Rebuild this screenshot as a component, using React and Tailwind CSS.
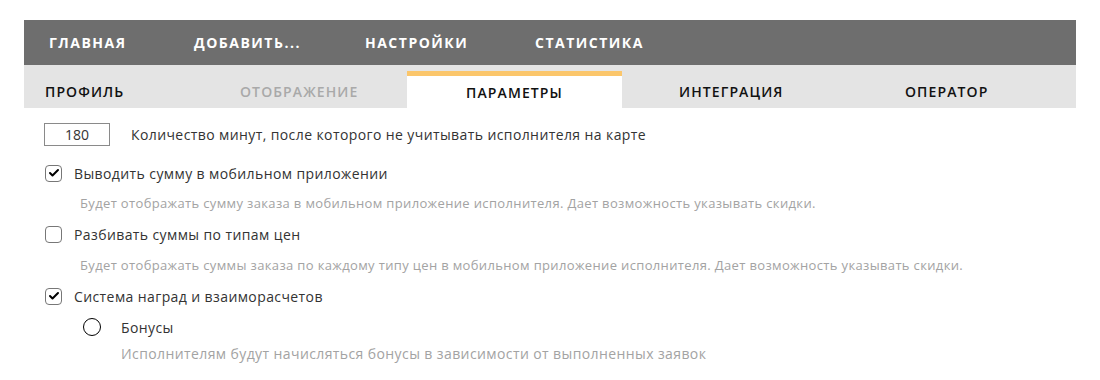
import { Check } from 'lucide-react'

const MENU = [
  { label: 'ГЛАВНАЯ', cls: 'w-[170px] pl-[25px]' },
  { label: 'ДОБАВИТЬ...', cls: 'w-[171px]' },
  { label: 'НАСТРОЙКИ', cls: 'w-[170px]' },
  { label: 'СТАТИСТИКА', cls: '' },
]

const TABS = [
  { label: 'ПРОФИЛЬ', cls: 'w-[195px] pl-[21px]' },
  { label: 'ОТОБРАЖЕНИЕ', cls: 'w-[188px] pl-[21px] text-[#a9a9a9]' },
  { label: 'ПАРАМЕТРЫ', cls: 'w-[215px] justify-center', active: true },
  { label: 'ИНТЕГРАЦИЯ', cls: 'w-[218px] pl-[57px]' },
  { label: 'ОПЕРАТОР', cls: 'flex-1 pl-[65px]' },
]

function CheckBox({ checked }) {
  return (
    <span className="w-[17px] h-[17px] rounded-[4px] border border-[#777] flex items-center justify-center shrink-0 bg-white">
      {checked && <Check size={12} strokeWidth={4} className="text-black" />}
    </span>
  )
}

function Option({ checked, label, hint }) {
  return (
    <div>
      <div className="flex items-center gap-[12px] pl-[21px] h-[20px]">
        <CheckBox checked={checked} />
        <span className="text-[14px] tracking-[0.4px] text-[#333]">{label}</span>
      </div>
      {hint && <p className="pl-[56px] mt-[11px] text-[13px] tracking-[0.35px] text-[#a3a3a3]">{hint}</p>}
    </div>
  )
}

export default function App() {
  return (
    <div className="w-[1100px] h-[380px] bg-white pt-[20px] px-[24px] overflow-hidden" style={{ fontFamily: '"Open Sans", sans-serif' }}>
      {/* Top menu */}
      <div className="h-[45px] bg-[#6e6e6e] flex items-center text-white font-bold text-[14px] tracking-[1.5px]">
        {MENU.map((m) => (
          <div key={m.label} className={m.cls}>{m.label}</div>
        ))}
      </div>

      {/* Tabs */}
      <div className="h-[43px] bg-[#e4e4e4] flex text-[14px] font-semibold tracking-[1.1px] text-[#111]">
        {TABS.map((t) =>
          t.active ? (
            <div key={t.label} className={`${t.cls} flex flex-col mt-[6px]`}>
              <div className="h-[5px] bg-[#fbc66b]" />
              <div className="flex-1 bg-white flex items-center justify-center">{t.label}</div>
            </div>
          ) : (
            <div key={t.label} className={`${t.cls} flex items-center pt-[10px]`}>{t.label}</div>
          )
        )}
      </div>

      {/* Content */}
      <div className="pt-[15px]">
        <div className="flex items-center gap-[21px] pl-[20px]">
          <div className="w-[66px] h-[23px] border border-[#8a8a8a] flex items-center justify-center text-[14px] text-[#333]">180</div>
          <span className="text-[14px] tracking-[0.4px] text-[#333]">Количество минут, после которого не учитывать исполнителя на карте</span>
        </div>

        <div className="mt-[17px] flex flex-col gap-[11px]">
          <Option checked label="Выводить сумму в мобильном приложении" hint="Будет отображать сумму заказа в мобильном приложение исполнителя. Дает возможность указывать скидки." />
          <Option label="Разбивать суммы по типам цен" hint="Будет отображать суммы заказа по каждому типу цен в мобильном приложение исполнителя. Дает возможность указывать скидки." />
          <Option checked label="Система наград и взаиморасчетов" />
        </div>

        <div className="mt-[11px] pl-[59px]">
          <div className="flex items-center gap-[20px] h-[20px]">
            <span className="w-[18px] h-[18px] rounded-full border-[1.5px] border-black shrink-0" />
            <span className="text-[14px] tracking-[0.4px] text-[#333]">Бонусы</span>
          </div>
          <p className="pl-[38px] mt-[6px] text-[14px] tracking-[0.4px] text-[#a3a3a3]">Исполнителям будут начисляться бонусы в зависимости от выполненных заявок</p>
        </div>
      </div>
    </div>
  )
}
